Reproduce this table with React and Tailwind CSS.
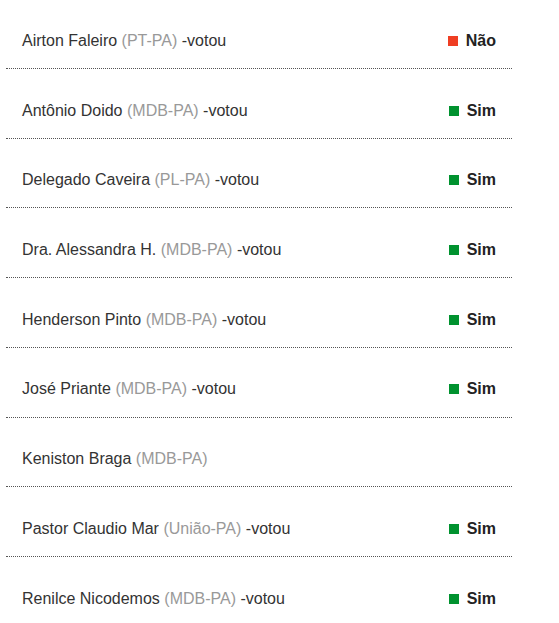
import React from "react";

const votes = [
  { name: "Airton Faleiro", party: "PT-PA", vote: "Não" },
  { name: "Antônio Doido", party: "MDB-PA", vote: "Sim" },
  { name: "Delegado Caveira", party: "PL-PA", vote: "Sim" },
  { name: "Dra. Alessandra H.", party: "MDB-PA", vote: "Sim" },
  { name: "Henderson Pinto", party: "MDB-PA", vote: "Sim" },
  { name: "José Priante", party: "MDB-PA", vote: "Sim" },
  { name: "Keniston Braga", party: "MDB-PA", vote: null },
  { name: "Pastor Claudio Mar", party: "União-PA", vote: "Sim" },
  { name: "Renilce Nicodemos", party: "MDB-PA", vote: "Sim" },
];

const VoteRow = ({ name, party, vote }) => (
  <li className="flex items-center justify-between pl-4 pr-4 pt-[29.6px] pb-[15.1px] leading-6 border-b border-dotted border-[#555]">
    <span className="text-[#333]">
      {name} <span className="text-[#999]">({party})</span>
      {vote && " -votou"}
    </span>
    {vote && (
      <span className="flex items-center gap-2 font-bold text-[#222]">
        <span
          className={
            vote === "Sim"
              ? "w-[10px] h-[10px] bg-[#00922f]"
              : "w-[10px] h-[10px] bg-[#ef3e23]"
          }
        ></span>
        {vote}
      </span>
    )}
  </li>
);

export default function App() {
  return (
    <div className="w-[559px] h-[623px] overflow-hidden bg-white font-['Liberation_Sans',Arial,sans-serif] text-[16px]">
      <ul className="ml-[6px] w-[506px] -mt-[0.6px]">
        {votes.map((v) => (
          <VoteRow key={v.name} {...v} />
        ))}
      </ul>
    </div>
  );
}
